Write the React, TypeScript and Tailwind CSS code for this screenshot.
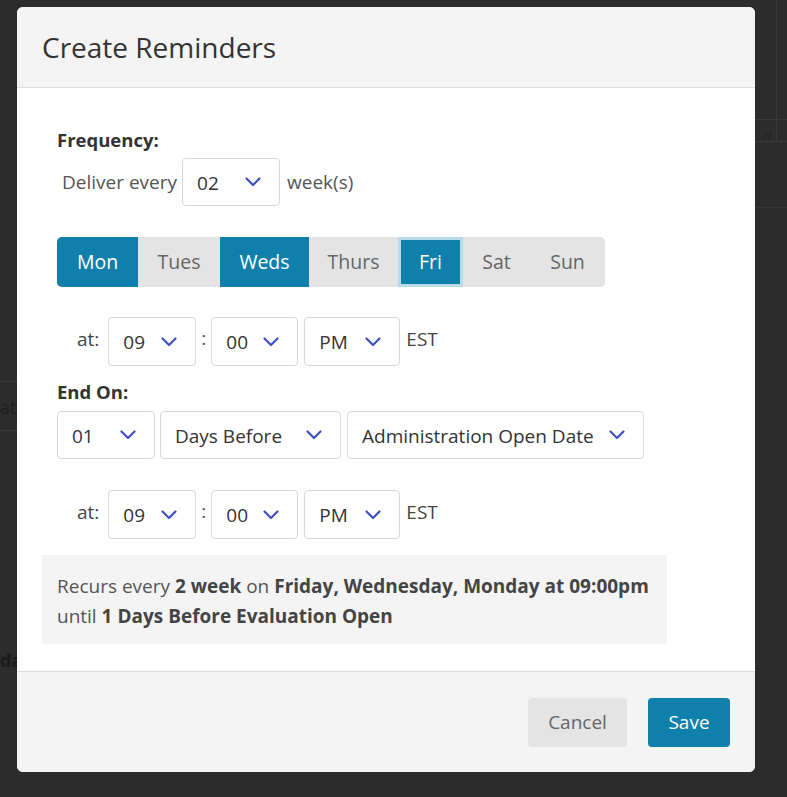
import { useState } from 'react'

const DAYS = [
  { label: 'Mon', w: 'w-[81px]' },
  { label: 'Tues', w: 'w-[82px]' },
  { label: 'Weds', w: 'w-[89px]' },
  { label: 'Thurs', w: 'w-[89px]' },
  { label: 'Fri', w: 'w-[65px]' },
  { label: 'Sat', w: 'w-[67px]' },
  { label: 'Sun', w: 'w-[75px]' },
]

function Chevron() {
  return (
    <svg width="16" height="10" viewBox="0 0 16 10" fill="none" className="shrink-0">
      <path d="M1.5 1.5 L8 8 L14.5 1.5" stroke="#3f51c0" strokeWidth="2.2" strokeLinecap="round" strokeLinejoin="round" />
    </svg>
  )
}

function Select({ value, width, h = 'h-[48px]' }: { value: string; width: string; h?: string }) {
  return (
    <div
      className={`flex ${h} ${width} items-center justify-between rounded-[4px] border border-[#d8d8d8] bg-white pl-[14px] pr-[18px] text-[19px] text-[#333]`}
    >
      <span className="pt-[2px]">{value}</span>
      <Chevron />
    </div>
  )
}

function TimeRow() {
  return (
    <div className="ml-[20px] flex items-start">
      <span className="mt-[8px] mr-[9px] text-[19px] text-[#444]">at:</span>
      <Select value="09" width="w-[88px]" h="h-[49px]" />
      <span className="mx-[5px] mt-[7px] text-[19px] text-[#555]">:</span>
      <Select value="00" width="w-[87px]" h="h-[49px]" />
      <div className="w-[6px]" />
      <Select value="PM" width="w-[96px]" h="h-[49px]" />
      <span className="mt-[8px] ml-[6px] text-[19px] text-[#444]">EST</span>
    </div>
  )
}

export default function App() {
  const [active, setActive] = useState<string[]>(['Mon', 'Weds', 'Fri'])

  const toggle = (d: string) =>
    setActive((a) => (a.includes(d) ? a.filter((x) => x !== d) : [...a, d]))

  return (
    <div
      className="relative h-[797px] w-full overflow-hidden bg-[#2c2c2c] pl-[17px] pt-[7px]"
      style={{ fontFamily: '"Open Sans", "Noto Sans", sans-serif' }}
    >
      {/* page behind the overlay */}
      <div className="absolute right-0 top-[119px] h-px w-[32px] bg-[#3a3a3a]" />
      <div className="absolute right-0 top-[141px] h-px w-[32px] bg-[#3a3a3a]" />
      <div className="absolute left-[776px] top-0 h-[141px] w-px bg-[#3a3a3a]" />
      <div className="absolute left-[764px] top-[130px] text-[10px] leading-none text-[#1c1c1c]">//</div>
      <div className="absolute right-0 top-[207px] h-px w-[32px] bg-[#363636]" />
      <div className="absolute left-0 top-[381px] h-px w-[17px] bg-[#3a3a3a]" />
      <div className="absolute left-0 top-[430px] h-px w-[17px] bg-[#3a3a3a]" />
      <div className="absolute left-0 top-[394px] text-[18px] text-[#1e1e1e]">ati</div>
      <div className="absolute left-0 top-[647px] text-[18px] font-bold text-[#1a1a1a]">da</div>

      <div className="relative flex h-[765px] w-[738px] flex-col overflow-hidden rounded-[6px] bg-white">
        {/* Header */}
        <div className="flex h-[81px] shrink-0 items-center border-b border-[#dcdcdc] bg-[#f4f4f4] pl-[25px]">
          <h2 className="text-[28px] text-[#333]">Create Reminders</h2>
        </div>

        {/* Body */}
        <div className="flex flex-1 flex-col pl-[40px] pr-[25px] pt-[40px]">
          <div className="text-[18.5px] leading-[24px] font-bold text-[#333]">Frequency:</div>

          <div className="mt-[6px] ml-[5px] flex items-center gap-[5px]">
            <span className="text-[19px] text-[#555]">Deliver every</span>
            <Select value="02" width="w-[98px]" />
            <span className="ml-[2px] text-[19px] text-[#555]">week(s)</span>
          </div>

          <div className="mt-[31px] flex h-[50px] w-fit overflow-hidden rounded-[5px] bg-[#e4e4e4]">
            {DAYS.map((d) => {
              const on = active.includes(d.label)
              const focus = d.label === 'Fri'
              return (
                <button
                  key={d.label}
                  onClick={() => toggle(d.label)}
                  className={`${d.w} flex h-full items-center justify-center text-[19.5px] ${
                    on ? 'bg-[#0f7fab] text-white' : 'bg-[#e4e4e4] text-[#666]'
                  } ${focus ? 'border-[3px] border-[#b9dbe7]' : ''}`}
                >
                  {d.label}
                </button>
              )
            })}
          </div>

          <div className="mt-[30px]">
            <TimeRow />
          </div>

          <div className="mt-[14px] text-[18.5px] leading-[24px] font-bold text-[#333]">End On:</div>

          <div className="mt-[7px] flex gap-[5px]">
            <Select value="01" width="w-[98px]" />
            <Select value="Days Before" width="w-[181px]" />
            <div className="ml-[1px]">
              <Select value="Administration Open Date" width="w-[297px]" />
            </div>
          </div>

          <div className="mt-[31px]">
            <TimeRow />
          </div>

          <div className="mt-[16px] -ml-[15px] w-[625px] bg-[#f4f4f4] pl-[15px] pt-[16px] pb-[13px] text-[19px] leading-[30px] text-[#555]">
            Recurs every <b className="text-[#444]">2 week</b> on{' '}
            <b className="text-[#444]">Friday, Wednesday, Monday at 09:00pm</b>
            <br />
            until <b className="text-[#444]">1 Days Before Evaluation Open</b>
          </div>
        </div>

        {/* Footer */}
        <div className="flex h-[101px] shrink-0 items-center justify-end gap-[21px] border-t border-[#dcdcdc] bg-[#f4f4f4] pr-[25px]">
          <button className="h-[49px] w-[99px] rounded-[4px] bg-[#e4e4e4] text-[19px] text-[#666]">Cancel</button>
          <button className="h-[49px] w-[82px] rounded-[4px] bg-[#0f7fab] text-[19px] text-white">Save</button>
        </div>
      </div>
    </div>
  )
}
